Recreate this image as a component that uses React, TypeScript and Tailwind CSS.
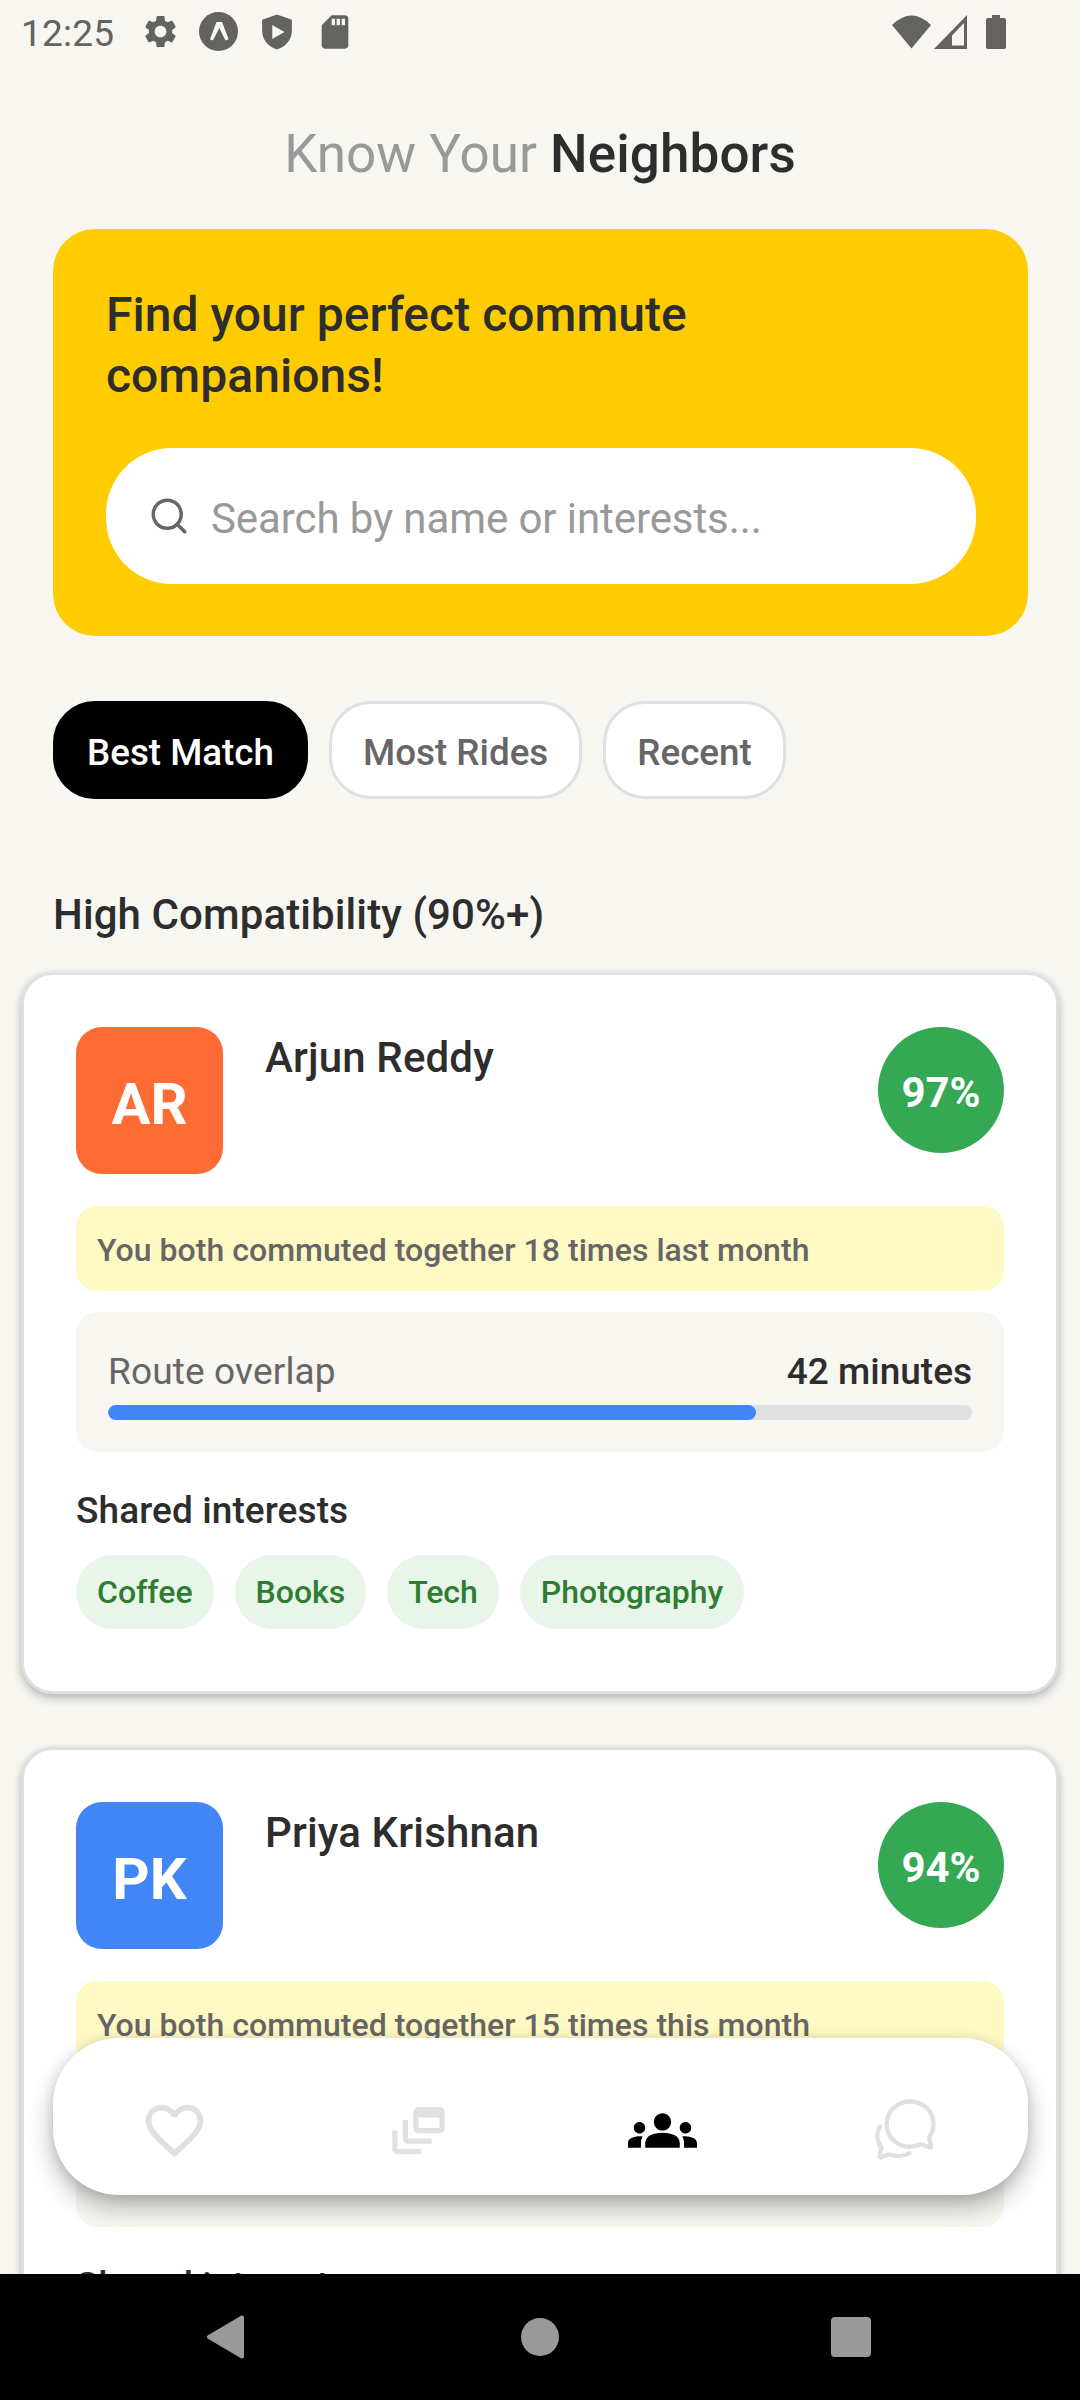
import type { ReactNode } from "react";
import { Search } from "lucide-react";
import { IoChatbubblesOutline } from "react-icons/io5";
import { MdFavoriteBorder, MdGroups, MdOutlineDynamicFeed, MdSettings, MdSdCard } from "react-icons/md";

type Neighbor = {
  initials: string;
  name: string;
  match: string;
  color: string;
  note: string;
  minutes: string;
  overlap: number;
  interests: string[];
};

const neighbors: Neighbor[] = [
  {
    initials: "AR",
    name: "Arjun Reddy",
    match: "97%",
    color: "bg-[#ff6b35]",
    note: "You both commuted together 18 times last month",
    minutes: "42 minutes",
    overlap: 75,
    interests: ["Coffee", "Books", "Tech", "Photography"],
  },
  {
    initials: "PK",
    name: "Priya Krishnan",
    match: "94%",
    color: "bg-[#4285f4]",
    note: "You both commuted together 15 times this month",
    minutes: "38 minutes",
    overlap: 68,
    interests: [],
  },
];

function StatusBar() {
  return (
    <header className="flex h-[63px] shrink-0 items-center pl-[21px] pr-[74px] text-[#646360]">
      <span className="w-[124px] pt-[3px] text-[37px] leading-[63px] tracking-[0.2px]">12:25</span>
      <MdSettings className="-ml-[4px] size-[39px]" />
      <svg className="ml-[19px] size-[39px]" viewBox="0 0 39 39">
        <circle cx="19.500" cy="19.500" r="19.500" fill="currentColor" />
        <path d="M11 27.300 17.500 10H23L29.700 27.300 26.500 28.500 20.300 16 13.900 28.500Z" fill="#f7f6f1" />
      </svg>
      <svg className="ml-[18px] size-[42px]" viewBox="0 0 24 24">
        <path
          d="M12 2 3.500 5v6.300c0 5.100 3.600 9.300 8.500 10.700 4.900-1.400 8.500-5.600 8.500-10.700V5z M9.300 8l7 4-7 4z"
          fill="currentColor"
          fillRule="evenodd"
        />
      </svg>
      <MdSdCard className="ml-[17px] size-[40px]" />
      <div className="ml-auto flex items-center">
        <svg className="h-[34px] w-[39px]" viewBox="0 0 39 34">
          <path d="M0 10Q19.500-9 39 10L19.500 33.500Z" fill="currentColor" />
        </svg>
        <svg className="ml-[3px] h-[34px] w-[33px]" viewBox="0 0 33 34">
          <path d="M33 0V34H0ZM30 8 18 20.500V30.500H30Z" fill="currentColor" fillRule="evenodd" />
        </svg>
        <svg className="ml-[19px] h-[34px] w-[20px]" viewBox="0 0 20 34">
          <path d="M6 0h8v3h4q2 0 2 2v27q0 2-2 2H2q-2 0-2-2V5q0-2 2-2h4z" fill="currentColor" />
        </svg>
      </div>
    </header>
  );
}

function FilterPill({ label, active = false }: { label: string; active?: boolean }) {
  return (
    <button
      className={
        active
          ? "flex h-[98px] items-center rounded-[42px] border-[3px] border-black bg-black px-[31px] pt-[6px] text-[36.75px] font-medium text-white"
          : "flex h-[98px] items-center rounded-[42px] border-[3px] border-[#e0e0e0] bg-white px-[31px] pt-[6px] text-[36.8px] font-medium text-[#666666]"
      }
    >
      {label}
    </button>
  );
}

function NeighborCard({ person }: { person: Neighbor }) {
  return (
    <article className="h-[722px] shrink-0 rounded-[32px] border-[3px] border-[#e0e0e0] bg-white px-[52px] pt-[52px] shadow-[0_5px_10px_rgba(0,0,0,0.22),0_0_6px_rgba(0,0,0,0.08)]">
      <div className="flex h-[147px] items-start">
        <div
          className={`flex size-[147px] items-center justify-center rounded-[26px] pt-[7px] text-[58px] font-bold text-white ${person.color}`}
        >
          {person.initials}
        </div>
        <h3 className="ml-[42px] flex-1 pt-[2px] text-[42px] font-medium leading-[57px] tracking-[0.15px]">
          {person.name}
        </h3>
        <div className="flex size-[126px] items-center justify-center rounded-full bg-[#34a853] pt-[4px] text-[42px] font-bold text-white">
          {person.match}
        </div>
      </div>
      <p className="mt-[32px] h-[85px] rounded-[21px] bg-[#fff9c4] px-[21px] pt-[2px] text-[32px] font-medium leading-[85px] tracking-[0.03px] text-[#666666]">
        {person.note}
      </p>
      <div className="mt-[21px] h-[140px] rounded-[21px] bg-[#f7f6f1] px-[32px] pt-[35px]">
        <div className="flex justify-between text-[37px] leading-[50px]">
          <span className="tracking-[0.15px] text-[#666666]">Route overlap</span>
          <span className="font-medium">{person.minutes}</span>
        </div>
        <div className="mt-[8px] h-[15px] overflow-hidden rounded-[8px] bg-[#e0e0e0]">
          <div className="h-full rounded-[8px] bg-[#4285f4]" style={{ width: `${person.overlap}%` }} />
        </div>
      </div>
      <h4 className="mt-[34px] text-[37px] font-medium leading-[50px] tracking-[0.1px]">Shared interests</h4>
      <div className="mt-[19px] flex gap-[21px]">
        {person.interests.map((interest) => (
          <span
            key={interest}
            className="h-[74px] rounded-full bg-[#e8f5e9] px-[21px] text-[32px] font-medium leading-[75px] text-[#2e7d32]"
          >
            {interest}
          </span>
        ))}
      </div>
    </article>
  );
}

function Tab({ children, active = false }: { children: ReactNode; active?: boolean }) {
  return (
    <button className={active ? "flex flex-1 justify-center text-black" : "flex flex-1 justify-center text-[#e0e0e0]"}>
      {children}
    </button>
  );
}

export default function App() {
  return (
    <div className="flex h-[2400px] w-[1080px] flex-col overflow-hidden bg-[#f7f6f1] font-['Roboto',sans-serif] text-[#2d2d2d]">
      <main className="relative flex h-[2274px] shrink-0 flex-col overflow-hidden">
        <StatusBar />
        <h1 className="mt-[55px] text-center text-[53px] leading-[72px] text-[#999999]">
          Know Your <span className="font-medium tracking-[0.1px] text-[#2d2d2d]">Neighbors</span>
        </h1>
        <section className="ml-[53px] mr-[52px] mt-[39px] h-[407px] shrink-0 rounded-[42px] bg-[#ffcc02] px-[53px] pt-[55px]">
          <h2 className="w-[720px] text-[48px] font-medium leading-[61px] tracking-[0.04px]">
            Find your perfect commute companions!
          </h2>
          <div className="mt-[42px] flex h-[136px] w-[870px] items-center rounded-[66px] bg-white pl-[42px]">
            <Search className="size-[42px] text-[#666666]" strokeWidth={2} />
            <span className="ml-[21px] pt-[5px] text-[42px] tracking-[-0.08px] text-[#999999]">
              Search by name or interests...
            </span>
          </div>
        </section>
        <div className="ml-[53px] mt-[65px] flex gap-[21px]">
          <FilterPill label="Best Match" active />
          <FilterPill label="Most Rides" />
          <FilterPill label="Recent" />
        </div>
        <h2 className="ml-[53px] mt-[86px] text-[42px] font-medium leading-[60px] tracking-[0.1px]">
          High Compatibility (90%+)
        </h2>
        <div className="mx-[21px] mt-[27px] flex flex-col gap-[53px]">
          {neighbors.map((person) => (
            <NeighborCard key={person.name} person={person} />
          ))}
        </div>
        <nav className="absolute left-[53px] top-[2038px] flex h-[157px] w-[975px] items-center rounded-[66px] bg-white pt-[28px] shadow-[0_12px_24px_rgba(0,0,0,0.28),0_2px_12px_rgba(0,0,0,0.10)]">
          <Tab>
            <MdFavoriteBorder className="size-[69px]" />
          </Tab>
          <Tab>
            <MdOutlineDynamicFeed className="size-[63px]" />
          </Tab>
          <Tab active>
            <MdGroups className="size-[69px]" />
          </Tab>
          <Tab>
            <IoChatbubblesOutline className="-ml-[2px] -mt-[2px] size-[69px]" />
          </Tab>
        </nav>
      </main>
      <footer className="flex h-[126px] shrink-0 items-center bg-black pl-[206px] text-[#999999]">
        <svg className="h-[44px] w-[39px]" viewBox="0 0 39 44">
          <path d="M36 2.500V41.500L3 22Z" fill="currentColor" stroke="currentColor" strokeWidth="4" strokeLinejoin="round" />
        </svg>
        <div className="ml-[276px] size-[38px] rounded-full bg-[#999999]" />
        <div className="ml-[272px] size-[40px] rounded-[4px] bg-[#999999]" />
      </footer>
    </div>
  );
}
